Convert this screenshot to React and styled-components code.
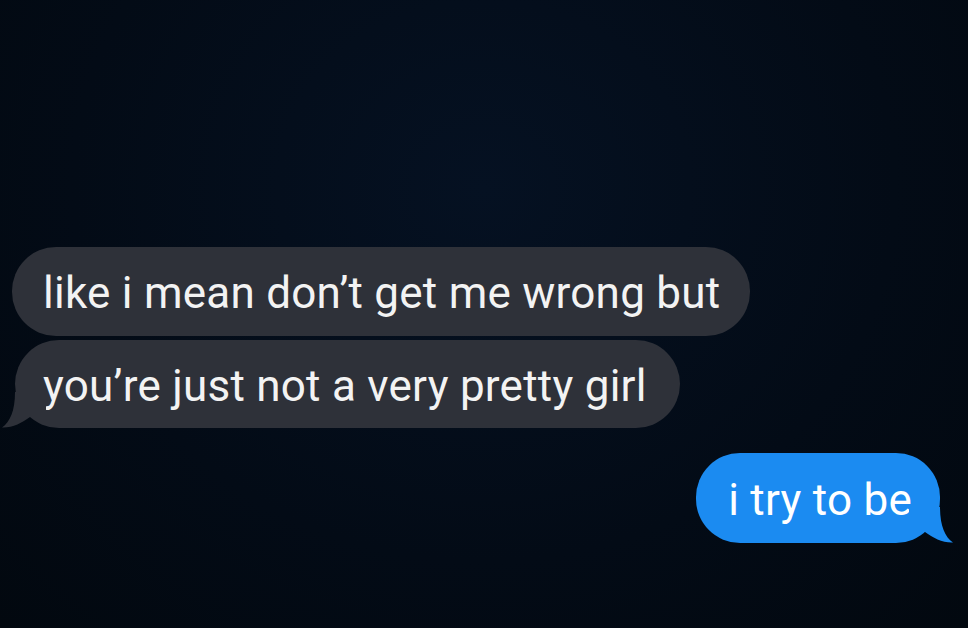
import React from "react";
import styled, { createGlobalStyle } from "styled-components";

const Global = createGlobalStyle`
  html, body { margin: 0; padding: 0; background: #030b16; }
  body { width: 968px; height: 628px; overflow: hidden; }
`;

const Screen = styled.div`
  width: 968px;
  height: 628px;
  box-sizing: border-box;
  background: radial-gradient(ellipse at 50% 30%, #051122 0%, #030b16 60%, #02080f 100%);
  padding: 247px 28px 0 12px;
  display: flex;
  flex-direction: column;
  font-family: Roboto, "Liberation Sans", sans-serif;
`;

const Group = styled.div`
  display: flex;
  flex-direction: column;
  align-items: ${(p) => (p.$mine ? "flex-end" : "flex-start")};
  gap: 4px;
  margin-top: ${(p) => p.$top || 0}px;
`;

const Bubble = styled.div`
  position: relative;
  height: ${(p) => p.$h}px;
  box-sizing: border-box;
  display: flex;
  align-items: center;
  padding: 3px ${(p) => p.$pr}px 0 ${(p) => p.$pl}px;
  margin-left: ${(p) => p.$ml || 0}px;
  border-radius: 44px;
  background: ${(p) => (p.$mine ? "#1b8bf1" : "#2e3139")};
  color: ${(p) => (p.$mine ? "#ffffff" : "#f3f3f3")};
  font-size: 44px;
  letter-spacing: 0.25px;
  white-space: nowrap;
`;

const Tail = styled.svg`
  position: absolute;
  bottom: 0;
  width: 44px;
  height: 36px;
  ${(p) => (p.$mine ? "right: -13px; transform: scaleX(-1);" : "left: -13px;")}
`;

function BubbleTail({ mine }) {
  return (
    <Tail $mine={mine} viewBox="0 0 44 36">
      <path
        d="M13 0 C13 19 8 30 0 35.5 C10 36 20 31 28 25 L44 25 L44 0 Z"
        fill={mine ? "#1b8bf1" : "#2e3139"}
      />
    </Tail>
  );
}

export default function App() {
  return (
    <Screen>
      <Global />
      <Group>
        <Bubble $h={89} $pl={31} $pr={30}>like i mean don’t get me wrong but</Bubble>
        <Bubble $h={88} $pl={28} $pr={33} $ml={3}>
          you’re just not a very pretty girl
          <BubbleTail />
        </Bubble>
      </Group>
      <Group $mine $top={25}>
        <Bubble $mine $h={90} $pl={32} $pr={28}>
          i try to be
          <BubbleTail mine />
        </Bubble>
      </Group>
    </Screen>
  );
}
